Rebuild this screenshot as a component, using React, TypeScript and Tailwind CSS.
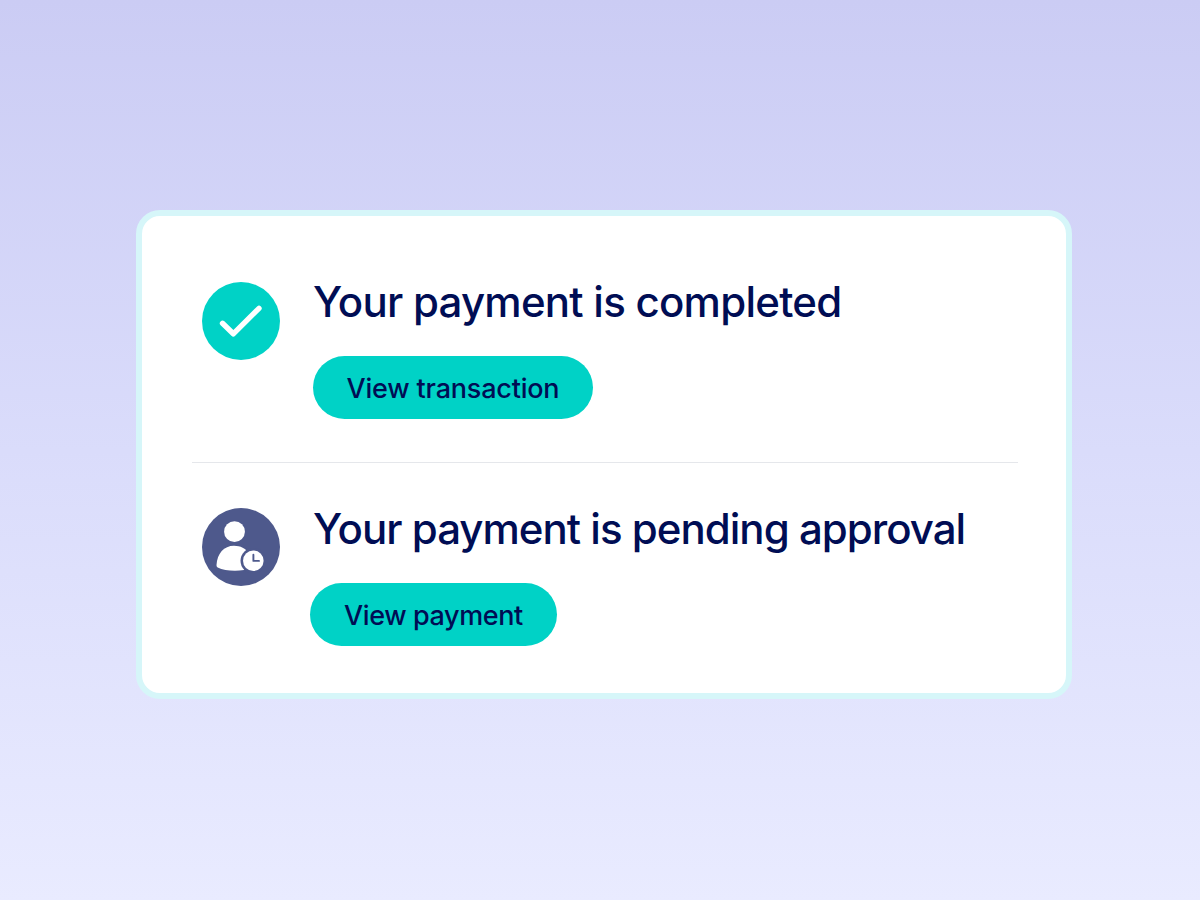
function CheckIcon() {
  return (
    <svg className="mt-[4px] h-[78px] w-[78px] shrink-0" viewBox="0 0 78 78" fill="none">
      <circle cx="39" cy="39" r="39" fill="#00D2C6" />
      <path d="M20.5 41.3 L31.3 51.8 L57 26.3" stroke="#fff" strokeWidth="5.4" strokeLinecap="round" strokeLinejoin="round" />
    </svg>
  );
}

function PendingIcon() {
  return (
    <svg className="mt-[3px] h-[78px] w-[78px] shrink-0" viewBox="0 0 78 78" fill="none">
      <circle cx="39" cy="39" r="39" fill="#4E598C" />
      <circle cx="32.5" cy="23.7" r="10.4" fill="#fff" />
      <path d="M14.5 57 C15 45.5 22 37.7 32 37.7 C38.5 37.7 43.5 40.5 47 45 L42 62 C32 63.5 22 62.5 15.7 59.4 C14.8 58.9 14.5 58.2 14.5 57 Z" fill="#fff" />
      <circle cx="51.3" cy="52.7" r="12.8" fill="#4E598C" />
      <circle cx="51.3" cy="52.7" r="10.3" fill="#fff" />
      <path d="M51.4 46.8 V52.9 H57" stroke="#4E598C" strokeWidth="1.9" strokeLinecap="round" strokeLinejoin="round" />
    </svg>
  );
}

export default function App() {
  return (
    <div className="h-[900px] w-[1200px] bg-linear-to-b from-[#CBCCF4] via-[#DADCFB] to-[#E9EBFF] pt-[210px] pl-[136px] font-[Inter,sans-serif] text-[#000D54]">
      <div className="h-[489px] w-[936px] rounded-[24px] border-[6px] border-[#D6F6F9] bg-white px-[50px] pt-[62px]">
        <div className="flex h-[184px] gap-[33px] pl-[10px]">
          <CheckIcon />
          <div>
            <h2 className="h-[78px] text-[42px] leading-[47px] font-medium tracking-[-0.75px] whitespace-nowrap">Your payment is completed</h2>
            <button className="h-[63px] w-[280px] rounded-full bg-[#00D2C6] pt-[3px] text-[27px] font-medium tracking-[-0.2px]">View transaction</button>
          </div>
        </div>
        <div className="h-px w-[826px] bg-gray-200" />
        <div className="flex gap-[33px] pt-[42px] pl-[10px]">
          <PendingIcon />
          <div>
            <h2 className="h-[78px] text-[42px] leading-[47px] font-medium tracking-[-0.98px] whitespace-nowrap">Your payment is pending approval</h2>
            <button className="-ml-[3px] h-[63px] w-[247px] rounded-full bg-[#00D2C6] pt-[3px] text-[27px] font-medium tracking-[-0.4px]">View payment</button>
          </div>
        </div>
      </div>
    </div>
  );
}
